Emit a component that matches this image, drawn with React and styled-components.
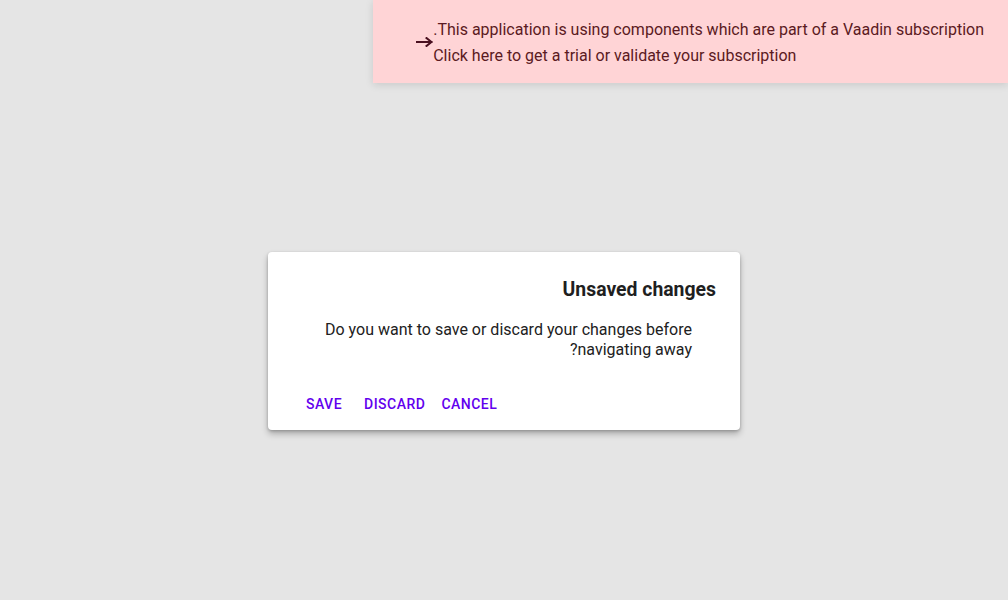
import React from "react";
import styled, { createGlobalStyle } from "styled-components";

const Global = createGlobalStyle`
  html, body { margin: 0; padding: 0; height: 100%; }
  body {
    background: #e5e5e5;
    font-family: Roboto, "Noto Sans", sans-serif;
    -webkit-font-smoothing: antialiased;
  }
`;

const Page = styled.div`
  position: relative;
  width: 100%;
  min-height: 100vh;
  display: flex;
  justify-content: center;
  align-items: flex-start;
  padding-top: 252px;
  box-sizing: border-box;
  direction: rtl;
`;

const Notification = styled.a`
  position: absolute;
  top: 0;
  right: 0;
  width: 635px;
  height: 83px;
  box-sizing: border-box;
  padding: 17px 24px 0 0;
  background: #ffd4d6;
  color: #5b1a22;
  text-decoration: none;
  box-shadow: 0 2px 8px rgba(0, 0, 0, 0.12);
  direction: rtl;
  display: flex;
  justify-content: flex-start;
  font-size: 16px;
  line-height: 26px;
`;

const NoteText = styled.div`
  position: relative;
  display: flex;
  flex-direction: column;
  align-items: stretch;
`;

const NoteLine = styled.div`
  white-space: nowrap;
  text-align: ${(p) => (p.$left ? "left" : "right")};
`;

const Arrow = styled.svg`
  position: absolute;
  left: -17px;
  top: 20px;
  width: 17px;
  height: 10px;
`;

const Dialog = styled.div`
  width: 472px;
  height: 178px;
  box-sizing: border-box;
  background: #fff;
  border-radius: 4px;
  box-shadow: 0 4px 6px rgba(0, 0, 0, 0.25), 0 1px 3px rgba(0, 0, 0, 0.2);
  display: flex;
  flex-direction: column;
  direction: rtl;
`;

const Content = styled.div`
  padding: 24px 24px 0 24px;
  flex: 1;
`;

const Title = styled.h3`
  margin: 0;
  font-size: 19.4px;
  font-weight: 700;
  line-height: 28px;
  color: #1f1f1f;
  text-align: right;
`;

const Message = styled.div`
  margin: 16px 24px 0 0;
  max-width: 400px;
  font-size: 16px;
  line-height: 20px;
  color: #212121;
  text-align: right;
`;

const Footer = styled.div`
  direction: ltr;
  display: flex;
  justify-content: flex-start;
  padding: 0 24px 8px 24px;
`;

const Button = styled.button`
  min-width: 64px;
  height: 36px;
  padding: 0 8px;
  border: none;
  background: transparent;
  color: #6200ee;
  font-family: Roboto, sans-serif;
  font-size: 14px;
  font-weight: 500;
  letter-spacing: 0.035em;
  text-transform: uppercase;
  cursor: pointer;
`;

export default function App() {
  return (
    <>
      <Global />
      <Page>
        <Notification href="#">
          <NoteText>
            <NoteLine>This application is using components which are part of a Vaadin subscription.</NoteLine>
            <NoteLine $left>Click here to get a trial or validate your subscription</NoteLine>
            <Arrow viewBox="0 0 17 10" aria-hidden="true">
              <path d="M1 5 H15.5 M10.5 1 L15.5 5 L10.5 9" fill="none" stroke="#4a1020" strokeWidth="2" strokeLinecap="square" />
            </Arrow>
          </NoteText>
        </Notification>
        <Dialog>
          <Content>
            <Title>Unsaved changes</Title>
            <Message>Do you want to save or discard your changes before navigating away?</Message>
          </Content>
          <Footer>
            <Button>Save</Button>
            <Button>Discard</Button>
            <Button>Cancel</Button>
          </Footer>
        </Dialog>
      </Page>
    </>
  );
}
